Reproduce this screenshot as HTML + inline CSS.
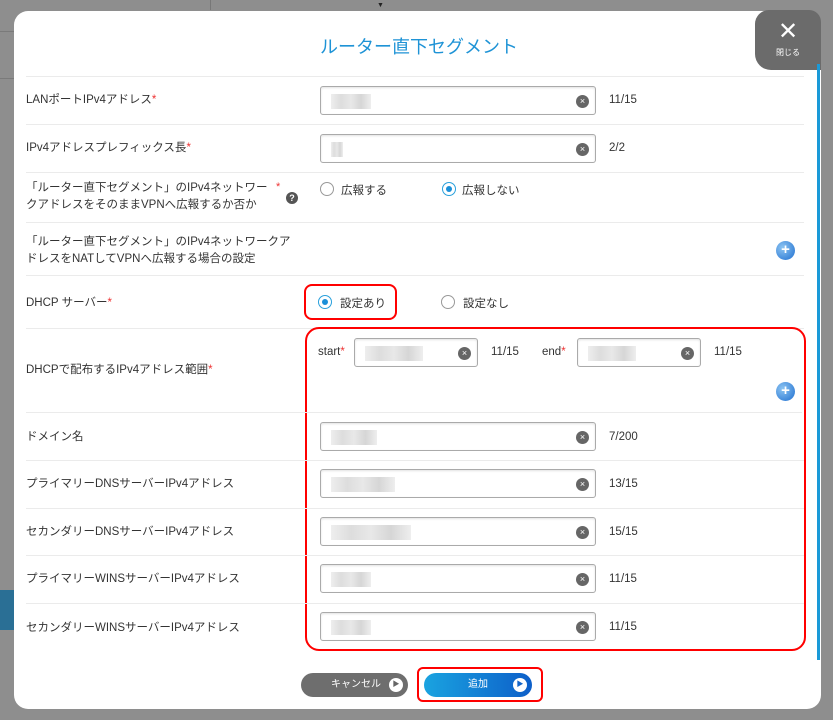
<!DOCTYPE html>
<html><head><meta charset="utf-8"><style>
*{box-sizing:border-box;margin:0;padding:0}
body{width:833px;height:720px;background:#8e8e8e;position:relative;overflow:hidden;font-family:"Liberation Sans","Noto Sans CJK JP",sans-serif;color:#333;font-size:11px}
.a{position:absolute}
.modal{left:14px;top:11px;width:807px;height:698px;background:#fff;border-radius:14px}
.close{left:755px;top:10px;width:66px;height:60px;background:#6b6b6b;border-radius:14px 12px 0 16px;color:#fff;text-align:center}
.sep{left:26px;width:778px;height:1px;background:#ebebeb}
.lbl{left:26px;font-size:11.5px;color:#333;line-height:17px}
.req{color:#e33}
.inp{width:276px;height:29px;border:1px solid #aaa;border-radius:3px;background:#fff;box-shadow:inset 0 1px 2px rgba(0,0,0,.12)}
.blur{position:absolute;left:10px;top:7px;height:15px;background:linear-gradient(90deg,#eee,#ddd,#e8e8e8,#d6d6d6,#eee)}
.x{position:absolute;right:6px;top:8px;width:13px;height:13px;border-radius:50%;background:#666;color:#fff;font-size:9px;line-height:13px;text-align:center}
.cnt{font-size:11.5px;color:#333}
.rad{width:14px;height:14px;border:1px solid #999;border-radius:50%;background:#fff}
.rad.on{border-color:#29a0dc}
.rad.on::after{content:"";position:absolute;left:3px;top:3px;width:6px;height:6px;border-radius:50%;background:#1a8fd8}
.plus{width:19px;height:19px;border-radius:50%;background:radial-gradient(circle at 35% 35%,#8cc4f2,#1f6fd0);color:#fff;font-weight:bold;font-size:15px;line-height:18px;text-align:center}
.red{border:2px solid #f00;border-radius:8px}
</style></head><body>
<div class="a" style="left:210px;top:0;width:1px;height:10px;background:#777"></div>
<div class="a" style="left:377px;top:2px;font-size:7px;color:#222">▼</div>
<div class="a" style="left:0;top:590px;width:14px;height:40px;background:#2a6f95"></div>
<div class="a" style="left:0;top:31px;width:14px;height:1px;background:#7a7a7a"></div>
<div class="a" style="left:0;top:78px;width:14px;height:1px;background:#7a7a7a"></div>
<div class="a modal"></div>
<div class="a close"><div style="font-size:24px;line-height:24px;margin-top:10px;font-weight:300">✕</div><div style="font-size:8px;margin-top:3px">閉じる</div></div>
<div class="a" style="left:817px;top:64px;width:3px;height:596px;background:#1a9ad8"></div>
<div class="a" style="left:320px;top:31px;font-size:18px;color:#1e93d6;top:33px">ルーター直下セグメント</div>

<div class="a sep" style="top:76px"></div>
<div class="a lbl" style="top:92px">LANポートIPv4アドレス<span class="req">*</span></div>
<div class="a inp" style="left:320px;top:86px"><div class="blur" style="width:40px"></div><div class="x">×</div></div>
<div class="a cnt" style="left:609px;top:94px">11/15</div>

<div class="a sep" style="top:124px"></div>
<div class="a lbl" style="top:140px">IPv4アドレスプレフィックス長<span class="req">*</span></div>
<div class="a inp" style="left:320px;top:134px"><div class="blur" style="width:12px"></div><div class="x">×</div></div>
<div class="a cnt" style="left:609px;top:142px">2/2</div>

<div class="a sep" style="top:172px"></div>
<div class="a lbl" style="top:180px">「ルーター直下セグメント」のIPv4ネットワー<br>クアドレスをそのままVPNへ広報するか否か</div>
<div class="a req" style="left:276px;top:181px">*</div>
<div class="a" style="left:286px;top:192px;width:12px;height:12px;border-radius:50%;background:#555;color:#fff;font-size:9px;text-align:center;line-height:12px;font-weight:bold">?</div>
<div class="a rad" style="left:320px;top:182px"></div>
<div class="a" style="left:341px;top:182px;font-size:11.5px">広報する</div>
<div class="a rad on" style="left:442px;top:182px"></div>
<div class="a" style="left:462px;top:182px;font-size:11.5px">広報しない</div>

<div class="a sep" style="top:222px"></div>
<div class="a lbl" style="top:234px">「ルーター直下セグメント」のIPv4ネットワークア<br>ドレスをNATしてVPNへ広報する場合の設定</div>
<div class="a plus" style="left:776px;top:241px">+</div>

<div class="a sep" style="top:275px"></div>
<div class="a lbl" style="top:295px">DHCP サーバー<span class="req">*</span></div>
<div class="a red" style="left:304px;top:284px;width:93px;height:36px"></div>
<div class="a rad on" style="left:318px;top:295px"></div>
<div class="a" style="left:340px;top:295px;font-size:11.5px">設定あり</div>
<div class="a rad" style="left:441px;top:295px"></div>
<div class="a" style="left:463px;top:295px;font-size:11.5px">設定なし</div>

<div class="a sep" style="top:328px"></div>
<div class="a red" style="left:305px;top:327px;width:501px;height:324px;border-radius:14px"></div>
<div class="a lbl" style="top:362px">DHCPで配布するIPv4アドレス範囲<span class="req">*</span></div>
<div class="a" style="left:318px;top:346px;font-size:11.5px">start<span class="req">*</span></div>
<div class="a inp" style="left:354px;top:338px;width:124px"><div class="blur" style="width:58px"></div><div class="x">×</div></div>
<div class="a cnt" style="left:491px;top:346px">11/15</div>
<div class="a" style="left:542px;top:346px;font-size:11.5px">end<span class="req">*</span></div>
<div class="a inp" style="left:577px;top:338px;width:124px"><div class="blur" style="width:48px"></div><div class="x">×</div></div>
<div class="a cnt" style="left:714px;top:346px">11/15</div>
<div class="a plus" style="left:776px;top:382px">+</div>

<div class="a sep" style="top:412px;left:26px;width:776px"></div>
<div class="a lbl" style="top:429px">ドメイン名</div>
<div class="a inp" style="left:320px;top:422px"><div class="blur" style="width:46px"></div><div class="x">×</div></div>
<div class="a cnt" style="left:609px;top:431px">7/200</div>

<div class="a sep" style="top:460px"></div>
<div class="a lbl" style="top:476px">プライマリーDNSサーバーIPv4アドレス</div>
<div class="a inp" style="left:320px;top:469px"><div class="blur" style="width:64px"></div><div class="x">×</div></div>
<div class="a cnt" style="left:609px;top:478px">13/15</div>

<div class="a sep" style="top:508px"></div>
<div class="a lbl" style="top:524px">セカンダリーDNSサーバーIPv4アドレス</div>
<div class="a inp" style="left:320px;top:517px"><div class="blur" style="width:80px"></div><div class="x">×</div></div>
<div class="a cnt" style="left:609px;top:526px">15/15</div>

<div class="a sep" style="top:555px"></div>
<div class="a lbl" style="top:571px">プライマリーWINSサーバーIPv4アドレス</div>
<div class="a inp" style="left:320px;top:564px"><div class="blur" style="width:40px"></div><div class="x">×</div></div>
<div class="a cnt" style="left:609px;top:573px">11/15</div>

<div class="a sep" style="top:603px"></div>
<div class="a lbl" style="top:620px">セカンダリーWINSサーバーIPv4アドレス</div>
<div class="a inp" style="left:320px;top:612px"><div class="blur" style="width:40px"></div><div class="x">×</div></div>
<div class="a cnt" style="left:609px;top:621px">11/15</div>

<div class="a" style="left:301px;top:673px;width:107px;height:24px;border-radius:12px;background:#6e6e6e;color:#fff;font-size:10px;line-height:24px;padding-left:30px">キャンセル</div>
<div class="a" style="left:389px;top:678px;width:14px;height:14px;border-radius:50%;background:#fff;color:#666;font-size:7px;line-height:14px;text-align:center">▶</div>
<div class="a red" style="left:417px;top:667px;width:126px;height:35px;border-radius:6px"></div>
<div class="a" style="left:424px;top:673px;width:108px;height:24px;border-radius:12px;background:linear-gradient(90deg,#1aa3e0,#0d5fc9);color:#fff;font-size:10px;line-height:24px;padding-left:44px">追加</div>
<div class="a" style="left:513px;top:678px;width:14px;height:14px;border-radius:50%;background:#fff;color:#1565c8;font-size:7px;line-height:14px;text-align:center">▶</div>
</body></html>
